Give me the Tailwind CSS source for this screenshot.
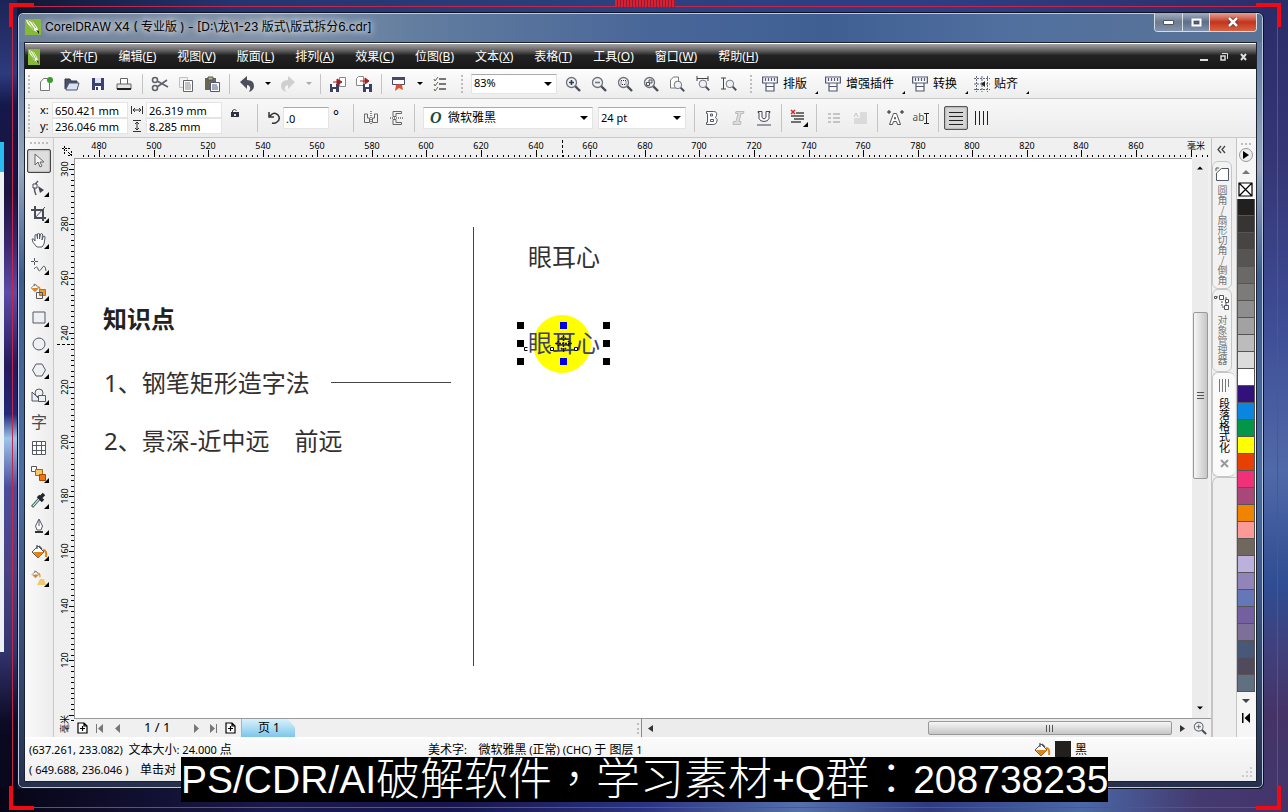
<!DOCTYPE html>
<html lang="zh-CN">
<head>
<meta charset="utf-8">
<title>CorelDRAW X4</title>
<script src="https://cdn.jsdelivr.net/npm/@tailwindcss/browser@4"></script>
</head>
<body class="h-screen overflow-hidden bg-[#2a2d6c] font-['Noto_Sans','Noto_Sans_CJK_SC',sans-serif] text-xs text-black">
<svg width="0" height="0" class="absolute" aria-hidden="true">
  <symbol id="lens" viewBox="0 0 16 16"><path d="M10 10l5 5" stroke="#4b4d57" stroke-width="2.4"/><circle cx="6.5" cy="6.5" r="5" fill="#eef1f5" stroke="#70737c" stroke-width="1.3"/></symbol>
  <symbol id="corner" viewBox="0 0 5 5"><path d="M5 0v5H0z" fill="#000"/></symbol>
  <symbol id="down" viewBox="0 0 8 4"><path d="M0 0h8L4 4z"/></symbol>
  <symbol id="plug" viewBox="0 0 16 16"><path d="M.6 1h14.800v6H.6zM4 7h8v8H4zM4 10.500h8M3.500 2v3M6.500 2v3M9.500 2v3M12.500 2v3" fill="#fafafa" stroke="#555a72" stroke-width="1.2"/></symbol>
  <symbol id="bucket" viewBox="0 0 18 16"><path d="M2 8l6-6 6 6-6 6z" fill="#fff" stroke="#50535f"/><path d="M3 8h11l-6 6z" fill="#e08314"/><path d="M7 5V1M9 2l3 3" stroke="#50535f" stroke-width="1.3"/><path d="M13 6q4 0 3 7" fill="none" stroke="#e08314" stroke-width="2"/></symbol>
  <symbol id="logo" viewBox="0 0 16 16"><path d="M0 0h16v16H0z" fill="#86b83a"/><path d="M1 1l7 2 4 5 2 6-6-3-5-5z" fill="#f8fbf2"/><path d="M3 2l6 8M6 2l5 7M2 5l7 6" stroke="#86b83a"/><path d="M11 11l3 1 0 3z" fill="#111"/></symbol>
  <symbol id="addpage" viewBox="0 0 11 12"><path d="M1 1h6l3 3v7H1zM7 1v3h3M5.500 4v5M3 6.500h5" fill="#fff" stroke="#000" stroke-width="1.200"/></symbol>
</svg>

<div class="relative flex h-full flex-col bg-[linear-gradient(90deg,#10142f_0%,#24346f_18%,#2c417f_50%,#2d3d83_75%,#2c2f6c_97%)] pt-3 pr-6 pb-[23px] pl-[17px]">
  <div class="absolute top-0 bottom-0 left-0 w-[17px] bg-[linear-gradient(180deg,#1c2456_0%,#2d3b7d_9%,#14184a_13%,#1b1440_24%,#3b2770_30%,#5c4ba8_36%,#241a5c_45%,#222878_51%,#9cc4ea_54%,#4b4c9c_60%,#4a4384_70%,#33356f_80%,#0c0a24_89%,#080618_100%)]"></div>
  <div class="absolute top-[142px] bottom-40 left-0 w-1 bg-[#eef1f4]"></div>
  <div class="absolute top-[142px] left-0 h-[30px] w-1 bg-[#28bdf0]"></div>
  <div class="absolute top-0 right-0 bottom-0 w-[26px] bg-[linear-gradient(180deg,#2a2c69_0%,#353675_20%,#3e4d96_40%,#5069a8_58%,#2f4d92_72%,#40407c_80%,#453367_88%,#41376c_100%)]"></div>
  <div class="absolute right-0 bottom-0 left-0 h-[23px] bg-[linear-gradient(90deg,#070515_0%,#1b1a4c_22%,#17154c_35%,#2a3482_50%,#5470aa_62%,#2d3b80_72%,#4a68a6_84%,#443a70_93%,#43346a_100%)]"></div>

  <!-- application window -->
  <main class="relative flex min-h-0 flex-1 flex-col rounded-md border border-[#0e1220] bg-[linear-gradient(180deg,#51709a_0%,#9aa8bf_20%,#3c5d8d_34%,#4a6fa4_60%,#26304c_100%)] px-1.5 pb-1.5 shadow-[inset_0_0_0_1px_#bccbdf]">
    <div class="absolute top-px right-px left-px h-7 rounded-t-md bg-[linear-gradient(90deg,#6e819a_0%,#8393a8_20%,#627d9f_32%,#4a6799_50%,#3f5f93_65%,#51709f_80%,#5b7495_100%)]"></div>
    <header class="relative flex h-[29px] shrink-0 items-start">
      <div class="flex h-7 items-center gap-1 pl-px">
        <svg class="h-4 w-4" aria-hidden="true"><use href="#logo"/></svg>
        <h1 class="font-['Inter','Noto_Sans_CJK_SC',sans-serif] text-xs whitespace-pre [text-shadow:0_0_6px_#fff,0_0_8px_#fff]">CorelDRAW X4 ( 专业版 ) - [D:\龙\1-23 版式\版式拆分6.cdr]</h1>
      </div>
      <div class="ml-auto flex h-[19px] overflow-hidden rounded-b border border-t-0 border-[#d6dce6]">
        <button aria-label="最小化" class="flex w-[28px] items-center justify-center border-r border-[#d6dce6] bg-linear-to-b from-[#a5afbf] via-[#6d7a91] to-[#8493aa]"><svg width="11" height="5"><path d="M.5.5h10v4H.5z" fill="#fff" stroke="#4b5366"/></svg></button>
        <button aria-label="最大化" class="flex w-[27px] items-center justify-center border-r border-[#d6dce6] bg-linear-to-b from-[#a5afbf] via-[#5d6d88] to-[#8493aa]"><svg width="11" height="9"><path d="M1.500 1.500h8v6h-8z" fill="none" stroke="#fff" stroke-width="2"/><path d="M3.500 3.500h4v2h-4z" fill="none" stroke="#434e64"/></svg></button>
        <button aria-label="关闭" class="flex w-[46px] items-center justify-center bg-linear-to-b from-[#e3a094] via-[#c2331c] to-[#d8613f]"><svg width="12" height="10"><path d="M2 1l8 8M10 1L2 9" stroke="#5b2a2a" stroke-width="4"/><path d="M2 1l8 8M10 1L2 9" stroke="#fff" stroke-width="2.500"/></svg></button>
      </div>
    </header>

    <div class="relative flex min-h-0 flex-1 flex-col border border-[#1b2130] bg-[#f0f0f0]">
      <!-- menu -->
      <nav class="flex h-[26px] shrink-0 items-center border-t border-white bg-[linear-gradient(180deg,#a5a3a4_0%,#5c5a5b_28%,#222_46%,#171717_100%)] text-white">
        <svg class="ml-[3px] h-4 w-3" viewBox="0 0 16 16" preserveAspectRatio="none" aria-hidden="true"><use href="#logo"/></svg>
        <div class="ml-5 flex gap-[21px] whitespace-nowrap">
          <button>文件(<u>F</u>)</button><button>编辑(<u>E</u>)</button><button>视图(<u>V</u>)</button><button>版面(<u>L</u>)</button><button>排列(<u>A</u>)</button><button>效果(<u>C</u>)</button><button>位图(<u>B</u>)</button><button>文本(<u>X</u>)</button><button>表格(<u>T</u>)</button><button>工具(<u>O</u>)</button><button>窗口(<u>W</u>)</button><button>帮助(<u>H</u>)</button>
        </div>
        <div class="mr-2 ml-auto flex items-center gap-3 text-[#ddd]">
          <button aria-label="最小化文档"><svg width="8" height="8"><path d="M0 7h8" stroke="#ddd" stroke-width="2"/></svg></button>
          <button aria-label="还原文档"><svg width="8" height="8" fill="none" stroke="#ddd"><path d="M2 .5h5.500V6"/><path d="M1 3h4v4H1z" stroke-width="1.500"/></svg></button>
          <button aria-label="关闭文档"><svg width="8" height="8"><path d="M1 1l5 6M6 1L1 7" stroke="#ddd" stroke-width="2"/></svg></button>
        </div>
      </nav>

      <!-- standard toolbar -->
      <div class="flex h-[30px] shrink-0 items-center border-b border-[#c9c9c9] bg-linear-to-b from-[#fdfdfd] to-[#ededed]">
        <i class="mx-[3px] h-[18px] w-0.5 border-l-2 border-dotted border-[#bdbdbd]"></i>
        <button aria-label="新建" class="flex h-6 w-[26px] items-center justify-center"><svg width="16" height="16"><path d="M2.500 6l3-3.500h6v12h-9z" fill="#fafafa" stroke="#777"/><circle cx="12" cy="4" r="3" fill="#3d9a2c"/></svg></button>
        <button aria-label="打开" class="flex h-6 w-[26px] items-center justify-center"><svg width="16" height="16"><path d="M1 13V3h5l1 2h6v3" fill="#44506a" stroke="#33394d"/><path d="M2 13l3-6h10l-2 7H2z" fill="#dbe2f2" stroke="#4d556b"/></svg></button>
        <button aria-label="保存" class="flex h-6 w-[26px] items-center justify-center"><svg width="14" height="14"><path d="M1 1h12v12H1z" fill="#3c3f72"/><path d="M4 1h6v5H4z" fill="#dfe3f3"/><path d="M4 9h6v4H4z" fill="#fff"/><path d="M5 10h2v3H5z" fill="#3c3f72"/></svg></button>
        <button aria-label="打印" class="flex h-6 w-[26px] items-center justify-center"><svg width="16" height="16"><path d="M4.500 8V2.500h7V8" fill="#fff" stroke="#666"/><path d="M1 8h14v5H1z" fill="#e4e4e4" stroke="#666"/><path d="M1 13h14" stroke="#222" stroke-width="2"/></svg></button>
        <i class="mr-1 ml-[5px] h-5 w-px bg-[#c4c4c4]"></i>
        <button aria-label="剪切" class="flex h-6 w-[26px] items-center justify-center"><svg width="18" height="16" fill="none" stroke="#60626b" stroke-width="1.600"><circle cx="4" cy="4" r="2.500"/><circle cx="4" cy="12" r="2.500"/><path d="M6 5l11 6M6 11l10-7"/></svg></button>
        <button aria-label="复制" class="flex h-6 w-[26px] items-center justify-center"><svg width="16" height="16"><path d="M1.500 1.500h8v10h-8z" fill="#f3f3f3" stroke="#c0c0c0"/><path d="M5.500 4.500h9v11h-9z" fill="#fff" stroke="#62646e"/><path d="M7 7h5M7 9h6M7 11h6M7 13h6" stroke="#888"/></svg></button>
        <button aria-label="粘贴" class="flex h-6 w-[26px] items-center justify-center"><svg width="16" height="16"><path d="M1 2h11v12H1z" fill="#6b6450"/><path d="M4 1h5v3H4z" fill="#b7b29c" stroke="#555"/><path d="M6.500 6.500h9v9h-9z" fill="#fff" stroke="#50557b"/><path d="M8 9h5M8 11h6M8 13h6" stroke="#50557b"/></svg></button>
        <i class="mx-1 h-5 w-px bg-[#c4c4c4]"></i>
        <button aria-label="撤消" class="flex h-6 w-[26px] items-center justify-center"><svg width="16" height="16"><path d="M1 6l7-6v4q7 0 7 6 0 4-5 6 2-3 1-5-1-2-3-2v4z" fill="#4c4e5c"/></svg></button>
        <button aria-label="撤消列表" class="flex h-6 w-[15px] items-center justify-center"><svg class="h-[3px] w-1.5"><use href="#down"/></svg></button>
        <button aria-label="重做" class="flex h-6 w-[26px] items-center justify-center"><svg width="16" height="16"><path d="M15 6L8 0v4Q1 4 1 10q0 4 5 6-2-3-1-5 1-2 3-2v4z" fill="#cfcfcf"/></svg></button>
        <button aria-label="重做列表" class="flex h-6 w-[15px] items-center justify-center"><svg class="h-[3px] w-1.5 fill-[#aaa]"><use href="#down"/></svg></button>
        <i class="mx-1 h-5 w-px bg-[#c4c4c4]"></i>
        <button aria-label="导入" class="flex h-6 w-[26px] items-center justify-center"><svg width="18" height="16"><path d="M10.500 1.500h6v9h-6z" fill="#fff" stroke="#888"/><path d="M1 8h9v8H1z" fill="#3c3f62"/><path d="M3 8h4v3H3zM4 13h3v3H4z" fill="#fff"/><path d="M4 6h6M8 3l5 3-5 3z" fill="#a02020" stroke="#a02020"/></svg></button>
        <button aria-label="导出" class="flex h-6 w-[26px] items-center justify-center"><svg width="18" height="16"><path d="M1.500 2.500l2-2h5v9h-7z" fill="#fff" stroke="#888"/><path d="M8 8h9v8H8z" fill="#3c3f62"/><path d="M10 8h4v3h-4zM11 13h3v3h-3z" fill="#fff"/><path d="M5 5h6M10 2l4 3-4 3z" fill="#a02020" stroke="#a02020"/></svg></button>
        <i class="mx-1 h-5 w-px bg-[#c4c4c4]"></i>
        <button aria-label="应用程序启动器" class="flex h-6 w-[26px] items-center justify-center"><svg width="16" height="16"><path d="M1.500 1.500h12v7h-12z" fill="#fff" stroke="#444a66"/><path d="M1 1h13v3H1z" fill="#444a66"/><path d="M5 9l3-1 3 1 1 5-4-2-4 3z" fill="#e2502c"/></svg></button>
        <button aria-label="启动列表" class="flex h-6 w-[15px] items-center justify-center"><svg class="h-[3px] w-1.5"><use href="#down"/></svg></button>
        <button aria-label="选项" class="flex h-6 w-[26px] items-center justify-center"><svg width="14" height="16" fill="none"><path d="M6 3h7M6 8h7M6 13h7" stroke="#777" stroke-width="2"/><path d="M1 3l1 2 3-4M1 8l1 2 3-4M1 13l1 2 3-4" stroke="#5c6c4d"/></svg></button>
        <i class="mr-2 ml-2 h-[18px] w-0.5 border-l-2 border-dotted border-[#bdbdbd]"></i>
        <div class="relative flex h-5 w-[86px] items-center border border-[#e4e4e4] border-t-[#aaa] bg-white">
          <select aria-label="缩放级别" class="h-full w-full appearance-none pl-0.5 text-[11px]"><option>83%</option></select>
          <svg class="pointer-events-none absolute right-1 h-1 w-2"><use href="#down"/></svg>
        </div>
        <div class="ml-[3px] flex">
          <button aria-label="放大" class="flex h-6 w-[26px] items-center justify-center"><svg width="16" height="16"><use href="#lens"/><path d="M4 6.500h5M6.500 4v5" stroke="#333a55" stroke-width="1.600"/></svg></button>
          <button aria-label="缩小" class="flex h-6 w-[26px] items-center justify-center"><svg width="16" height="16"><use href="#lens"/><path d="M4 6.500h5" stroke="#777" stroke-width="1.600"/></svg></button>
          <button aria-label="缩放选定范围" class="flex h-6 w-[26px] items-center justify-center"><svg width="16" height="16"><use href="#lens"/><path d="M4 4.500h5v4H4z" fill="none" stroke="#333" stroke-dasharray="1 1"/></svg></button>
          <button aria-label="缩放全部对象" class="flex h-6 w-[26px] items-center justify-center"><svg width="16" height="16"><use href="#lens"/><path d="M3.500 6.500h3v3h-3zM6 4h3v3H6z" fill="none" stroke="#555"/></svg></button>
          <button aria-label="缩放页面" class="flex h-6 w-[26px] items-center justify-center"><svg width="16" height="16"><path d="M1.500 12V4l3-3h5v11z" fill="#fff" stroke="#777"/><svg x="4" y="4" width="12" height="12"><use href="#lens"/></svg></svg></button>
          <button aria-label="按页宽缩放" class="flex h-6 w-[26px] items-center justify-center"><svg width="16" height="16"><path d="M2 0v5M13 0v5M2 2.500h11" stroke="#444"/><svg x="3" y="3" width="12" height="12"><use href="#lens"/></svg></svg></button>
          <button aria-label="按页高缩放" class="flex h-6 w-[26px] items-center justify-center"><svg width="16" height="16"><path d="M0 2h5M0 13h5M2.500 2v11" stroke="#444"/><svg x="4" y="3" width="12" height="12"><use href="#lens"/></svg></svg></button>
        </div>
        <i class="mr-[9px] ml-2 h-[18px] w-0.5 border-l-2 border-dotted border-[#bdbdbd]"></i>
        <div class="flex gap-1.5 whitespace-nowrap">
          <button class="flex items-center gap-1"><svg class="h-4 w-[18px]"><use href="#plug"/></svg>排版<svg class="mt-[17px] ml-1 h-[3px] w-[3px]"><use href="#corner"/></svg></button>
          <button class="flex items-center gap-1"><svg class="h-4 w-[18px]"><use href="#plug"/></svg>增强插件<svg class="mt-[17px] ml-1 h-[3px] w-[3px]"><use href="#corner"/></svg></button>
          <button class="flex items-center gap-1"><svg class="h-4 w-[18px]"><use href="#plug"/></svg>转换<svg class="mt-[17px] ml-1 h-[3px] w-[3px]"><use href="#corner"/></svg></button>
          <button class="flex items-center gap-1"><svg width="16" height="16"><path d="M0 2.500h16M0 13.500h16M2.500 0v16M13.500 0v16M8 0v16M0 8h16" stroke="#62667e" stroke-dasharray="2 1"/><path d="M11 5v6L7 8z" fill="#222"/></svg>贴齐<svg class="mt-[17px] ml-1 h-[3px] w-[3px]"><use href="#corner"/></svg></button>
        </div>
      </div>

      <!-- property bar -->
      <div class="flex h-[39px] shrink-0 items-center border-b border-[#c9c9c9] bg-linear-to-b from-[#f8f8f8] to-[#ececec] text-[11px]">
        <i class="mx-[3px] h-7 w-0.5 border-l-2 border-dotted border-[#bdbdbd]"></i>
        <div class="ml-[7px] grid grid-cols-[12px_76px_18px_76px] items-center">
          <label for="px">x:</label><input id="px" value="650.421 mm" class="h-4 w-full border border-[#e4e4e4] bg-white pl-0.5">
          <svg class="mx-auto" width="12" height="10" fill="none" stroke="#333"><path d="M.5 1v8M11.500 1v8M2 5h8M4 3L2 5l2 2M8 3l2 2-2 2"/></svg><input aria-label="宽度" value="26.319 mm" class="h-4 w-full border border-[#e4e4e4] bg-white pl-0.5">
          <label for="py">y:</label><input id="py" value="236.046 mm" class="h-4 w-full border border-[#e4e4e4] bg-white pl-0.5">
          <svg class="mx-auto" width="10" height="12" fill="none" stroke="#333"><path d="M1 .5h8M1 11.500h8M5 2v8M3 4l2-2 2 2M3 8l2 2 2-2"/></svg><input aria-label="高度" value="8.285 mm" class="h-4 w-full border border-[#e4e4e4] bg-white pl-0.5">
        </div>
        <button aria-label="锁定比率" class="mb-2.5 ml-2"><svg width="10" height="10"><path d="M2.500 5V2.500q2-2 4 0" fill="none" stroke="#333"/><path d="M1 4h8v5H1z" fill="#30323f"/><path d="M4 6h2v2H4z" fill="#ddd"/></svg></button>
        <i class="mr-[9px] ml-[17px] h-7 w-px bg-[#c4c4c4]"></i>
        <svg width="14" height="14" fill="none" stroke="#333" stroke-width="1.500"><path d="M3 5q4-5 8-1 3 4-1 7-2 2-5 1M2 1v5h5"/></svg>
        <input aria-label="旋转角度" value=".0" class="ml-0.5 h-[22px] w-[46px] border border-[#e4e4e4] border-t-[#aaa] bg-white pl-0.5">
        <span class="mb-1 ml-1 text-sm leading-none">°</span>
        <i class="mr-1 ml-[14px] h-7 w-px bg-[#c4c4c4]"></i>
        <button aria-label="水平镜像" class="flex h-6 w-[26px] items-center justify-center"><svg width="16" height="14" fill="none" stroke="#666"><path d="M1.500 3v8.500h5V7h-2V3zM14.500 3v8.500h-5V7h2V3z"/><path d="M8 0v14" stroke="#222" stroke-dasharray="1 1"/></svg></button>
        <button aria-label="垂直镜像" class="flex h-6 w-[26px] items-center justify-center"><svg width="14" height="16" fill="none" stroke="#666"><path d="M3 1.500h8.500v2H6v3H3zM3 14.500h8.500v-2H6v-3H3z"/><path d="M0 8h14" stroke="#222" stroke-dasharray="1 1"/></svg></button>
        <i class="mr-2 ml-1 h-7 w-px bg-[#c4c4c4]"></i>
        <div class="relative flex h-[22px] w-[170px] items-center border border-[#e4e4e4] border-t-[#aaa] bg-white">
          <span class="absolute left-1.5 font-['Liberation_Serif'] text-base leading-none font-bold text-[#174c3d] italic" aria-hidden="true">O</span>
          <select aria-label="字体" class="h-full w-full appearance-none pl-6 text-xs"><option>微软雅黑</option></select>
          <svg class="pointer-events-none absolute right-1 h-1 w-2"><use href="#down"/></svg>
        </div>
        <div class="relative ml-[5px] flex h-[22px] w-[88px] items-center border border-[#e4e4e4] border-t-[#aaa] bg-white">
          <select aria-label="字体大小" class="h-full w-full appearance-none pl-0.5 text-[11px]"><option>24 pt</option></select>
          <svg class="pointer-events-none absolute right-1 h-1 w-2"><use href="#down"/></svg>
        </div>
        <i class="mr-1 ml-2 h-7 w-px bg-[#c4c4c4]"></i>
        <button aria-label="粗体" class="flex h-6 w-[26px] items-center justify-center"><svg width="12" height="14" fill="#fff" stroke="#555866"><path d="M.5.500h7q4 0 3 4-1 2-1 2 3 2 1 5-1 2-3 2h-7v-2h1v-9h-1z"/><path d="M4.500 3h2v2h-2zM4.500 8.500h3v2h-3z"/></svg></button>
        <button aria-label="斜体" class="flex h-6 w-[26px] items-center justify-center"><svg width="13" height="14" fill="#ddd" stroke="#bbb"><path d="M4 .5h8l-.5 2H9l-2 8h2l-.5 3H1l.5-3H4l2-8H3.500z"/></svg></button>
        <button aria-label="下划线" class="flex h-6 w-[26px] items-center justify-center"><svg width="14" height="15" fill="#fff" stroke="#444654"><path d="M1 .5h4v6q2 3 4 0v-6h4v1h-1v6q-1 3-5 3t-5-3v-6H1z"/><path d="M0 14h14"/></svg></button>
        <i class="mx-1 h-7 w-px bg-[#c4c4c4]"></i>
        <button aria-label="对齐" class="flex h-6 w-[26px] items-center justify-center"><svg width="18" height="18"><path d="M6 4h8M1 7h13M4 10h10M1 13h10" stroke="#444" stroke-width="1.500"/><path d="M1 1l4 4M5 1L1 5" stroke="#d22" stroke-width="1.500"/><path d="M18 13v5h-5z"/></svg></button>
        <i class="mr-1 ml-1 h-7 w-px bg-[#c4c4c4]"></i>
        <button aria-label="项目符号" class="flex h-6 w-[26px] items-center justify-center"><svg width="12" height="12" stroke="#c4c4c4" stroke-width="2"><path d="M0 2h3M5 2h7M0 6h3M5 6h7M0 10h3M5 10h7"/></svg></button>
        <button aria-label="首字下沉" class="flex h-6 w-[26px] items-center justify-center"><svg width="13" height="12" stroke="#c4c4c4" fill="none"><path d="M0 5l2-4 2 4M6 1h7M6 3h7M6 5h7M0 7h13M0 9h13M0 11h13"/></svg></button>
        <i class="mx-1 h-7 w-px bg-[#c4c4c4]"></i>
        <button aria-label="字符格式化" class="flex h-6 w-[26px] items-center justify-center"><svg width="17" height="16" fill="#fff" stroke="#555"><path d="M2.500 14.500l4-11h3l4 11h-3l-1-3h-3l-1 3zM7.500 9h1l-.5-2z"/><path d="M0 2h4M2 0v4M13 2h4M15 0v4" stroke="#222"/></svg></button>
        <button aria-label="编辑文本" class="flex h-6 w-[26px] items-center justify-center text-[10px] text-[#555]">ab<svg width="5" height="11" fill="none" stroke="#222"><path d="M0 .5h5M0 10.500h5M2.500 1v9"/></svg></button>
        <i class="mr-[5px] ml-1 h-7 w-px bg-[#c4c4c4]"></i>
        <button aria-label="横排文字" aria-pressed="true" class="flex h-6 w-6 items-center justify-center rounded-xs border border-[#555] bg-[#d6d6d6] shadow-[inset_0_0_2px_#777]"><svg width="15" height="14" stroke="#222"><path d="M0 1.500h14M0 5.500h14M0 9.500h14M0 13.500h14"/></svg></button>
        <button aria-label="竖排文字" class="flex h-6 w-[26px] items-center justify-center"><svg width="15" height="14" stroke="#222"><path d="M1.500 0v14M5.500 0v14M9.500 0v14M13.500 0v14"/></svg></button>
      </div>

      <div class="flex min-h-0 flex-1">
        <!-- toolbox -->
        <aside class="flex w-[29px] shrink-0 flex-col items-center border-r border-[#c9c9c9] bg-linear-to-r from-[#fafafa] to-[#ececec] pt-1">
          <i class="mb-[5px] h-0.5 w-[18px] shrink-0 border-t-2 border-dotted border-[#bdbdbd]"></i>
          <button aria-label="挑选" aria-pressed="true" class="flex h-6 w-6 shrink-0 items-center justify-center rounded-xs border border-[#444] bg-[#dedede] shadow-[inset_0_0_2px_#777]"><svg width="12" height="16"><path d="M2 1v11l3-3 2 5 2-1-2-4h4z" fill="#f4f4f4" stroke="#666"/></svg></button>
          <button aria-label="形状" class="relative mt-0.5 flex h-[26px] w-6 shrink-0 items-center justify-center"><svg width="16" height="16"><path d="M7 1Q1 6 5 15" fill="none" stroke="#556" stroke-width="1.500"/><path d="M2 4h4v4H2z" fill="#fff" stroke="#445"/><path d="M7 6l6 4-4 3z" fill="#445"/></svg><svg class="absolute right-0.5 bottom-1 h-[5px] w-[5px]"><use href="#corner"/></svg></button>
          <button aria-label="裁剪" class="relative flex h-[26px] w-6 shrink-0 items-center justify-center"><svg width="16" height="16" fill="none" stroke="#4a4b58"><path d="M4 0v12h11M0 4h12v11" stroke-width="2"/><path d="M3 13L14 1"/></svg><svg class="absolute right-0.5 bottom-1 h-[5px] w-[5px]"><use href="#corner"/></svg></button>
          <button aria-label="手形" class="relative flex h-[26px] w-6 shrink-0 items-center justify-center"><svg width="16" height="16"><path d="M5 14Q1 10 1 7q2-1 3 2L4 3q1-1 2 0l.5 4V2q1-2 2 0v5l1-5q1-1 2 0L11 8l1.500-4q2 0 1.500 2l-1 6-2 3H6z" fill="#fff" stroke="#555866"/></svg><svg class="absolute right-0.5 bottom-1 h-[5px] w-[5px]"><use href="#corner"/></svg></button>
          <button aria-label="手绘" class="relative flex h-[26px] w-6 shrink-0 items-center justify-center"><svg width="16" height="16" fill="none" stroke="#555866"><path d="M3.500 0v7M0 3.500h7" stroke-dasharray="3 1"/><path d="M3 11q3-4 4 0t4-1 4 3"/></svg><svg class="absolute right-0.5 bottom-1 h-[5px] w-[5px]"><use href="#corner"/></svg></button>
          <button aria-label="智能填充" class="relative flex h-[26px] w-6 shrink-0 items-center justify-center"><svg width="18" height="18"><svg width="11" height="10" viewBox="0 0 18 16"><use href="#bucket"/></svg><path d="M9.500 6.500h6v6h-6z" fill="#f09a30" stroke="#c66b12"/><path d="M6.500 9.500h6v6h-6z" fill="none" stroke="#555"/></svg><svg class="absolute right-0.5 bottom-1 h-[5px] w-[5px]"><use href="#corner"/></svg></button>
          <button aria-label="矩形" class="relative flex h-[26px] w-6 shrink-0 items-center justify-center"><svg width="14" height="14"><path d="M1 1h12v11H1z" fill="#eef0f2" stroke="#555866"/></svg><svg class="absolute right-0.5 bottom-1 h-[5px] w-[5px]"><use href="#corner"/></svg></button>
          <button aria-label="椭圆" class="relative flex h-[26px] w-6 shrink-0 items-center justify-center"><svg width="14" height="14"><circle cx="7" cy="7" r="6" fill="#eef0f2" stroke="#555866"/></svg><svg class="absolute right-0.5 bottom-1 h-[5px] w-[5px]"><use href="#corner"/></svg></button>
          <button aria-label="多边形" class="relative flex h-[26px] w-6 shrink-0 items-center justify-center"><svg width="14" height="14"><path d="M4 1h6l3.500 6L10 13H4L.5 7z" fill="#eef0f2" stroke="#555866"/></svg><svg class="absolute right-0.5 bottom-1 h-[5px] w-[5px]"><use href="#corner"/></svg></button>
          <button aria-label="基本形状" class="relative flex h-[26px] w-6 shrink-0 items-center justify-center"><svg width="16" height="16" fill="#eef0f2" stroke="#555866"><path d="M1 4l9 9H1z"/><circle cx="8" cy="5" r="4"/><path d="M7.500 7.500h7v6h-7z"/></svg><svg class="absolute right-0.5 bottom-1 h-[5px] w-[5px]"><use href="#corner"/></svg></button>
          <button aria-label="文本" class="flex h-[26px] w-6 shrink-0 items-center justify-center text-base leading-none text-[#4a4b55]">字</button>
          <button aria-label="表格" class="flex h-[26px] w-6 shrink-0 items-center justify-center"><svg width="14" height="14"><path d="M.5.500h13v13H.5zM.5 4.500h13M.5 9.500h13M4.500.500v13M9.500.500v13" fill="#fff" stroke="#555866"/></svg></button>
          <button aria-label="交互式" class="relative flex h-[26px] w-6 shrink-0 items-center justify-center"><svg width="16" height="16"><path d="M.5.500h5v5h-5z" fill="#fff" stroke="#555"/><path d="M4.500 3.500h7v6h-7z" fill="#fac66a" stroke="#a46510"/><path d="M8.500 8.500h6v6h-6z" fill="#f0780a" stroke="#a04a05"/></svg><svg class="absolute right-0.5 bottom-1 h-[5px] w-[5px]"><use href="#corner"/></svg></button>
          <button aria-label="滴管" class="relative flex h-[26px] w-6 shrink-0 items-center justify-center"><svg width="16" height="16"><path d="M1 15l8-9" stroke="#4e7a6c" stroke-width="3"/><path d="M2 14l7-8" stroke="#fff"/><path d="M7 4l5 5M9 6l4-4" stroke="#23252e" stroke-width="3.500"/></svg><svg class="absolute right-0.5 bottom-1 h-[5px] w-[5px]"><use href="#corner"/></svg></button>
          <button aria-label="轮廓" class="relative flex h-[26px] w-6 shrink-0 items-center justify-center"><svg width="12" height="16" fill="#fff" stroke="#555866"><path d="M6 1l3.500 7L8 12H4L2.500 8zM6 2v6"/><path d="M2 14h8" stroke="#333" stroke-width="2"/></svg><svg class="absolute right-0.5 bottom-1 h-[5px] w-[5px]"><use href="#corner"/></svg></button>
          <button aria-label="填充" class="relative flex h-[26px] w-6 shrink-0 items-center justify-center"><svg class="h-4 w-[18px]"><use href="#bucket"/></svg><svg class="absolute right-0.5 bottom-1 h-[5px] w-[5px]"><use href="#corner"/></svg></button>
          <button aria-label="交互式填充" class="relative flex h-[26px] w-6 shrink-0 items-center justify-center"><svg width="16" height="16"><svg width="10" height="9" viewBox="0 0 18 16"><use href="#bucket"/></svg><path d="M9 9h4l2 6H6z" fill="#f1cb6a"/></svg><svg class="absolute right-0.5 bottom-1 h-[5px] w-[5px]"><use href="#corner"/></svg></button>
        </aside>

        <!-- drawing area with rulers -->
        <section class="flex min-w-0 flex-1 flex-col">
          <svg id="hr" class="h-5 w-full shrink-0 overflow-hidden bg-[#f0f0f0] text-[9px]" shape-rendering="crispEdges"></svg>
          <div class="flex min-h-0 flex-1">
            <svg id="vr" class="h-full w-5 shrink-0 bg-[#f0f0f0] text-[9px]" shape-rendering="crispEdges"></svg>
            <div class="flex min-w-0 flex-1 flex-col">
              <div class="flex min-h-0 flex-1">
                <div class="relative min-w-0 flex-1 overflow-hidden border-t border-l border-[#999] bg-white text-2xl leading-8 whitespace-pre text-[#33302f]">
                  <p class="absolute top-36 left-7 font-bold text-[#222]">知识点</p>
                  <p class="absolute top-52 left-[29px]">1、钢笔矩形造字法</p>
                  <p class="absolute top-[266px] left-[29px]">2、景深-近中远    前远</p>
                  <i class="absolute top-[223px] left-64 h-px w-[120px] bg-[#444]"></i>
                  <i class="absolute top-[68px] left-[398px] h-[439px] w-px bg-[#444]"></i>
                  <p class="absolute top-[82px] left-[453px]">眼耳心</p>
                  <i class="absolute top-[156px] left-[458px] h-[58px] w-[58px] rounded-full bg-[#ffff00]"></i>
                  <p class="absolute top-[168px] left-[453px] text-[#3f3f6c]">眼耳心</p>
                  <svg class="absolute top-[162px] left-[441px]" width="96" height="46" aria-hidden="true">
                    <path d="M1 1h7v7H1zM87 1h7v7h-7zM1 19h7v7H1zM87 19h7v7h-7zM1 37h7v7H1zM87 37h7v7h-7z"/>
                    <path d="M44 1h7v7h-7zM44 37h7v7h-7z" fill="#0000e6"/>
                    <path d="M11.500 29.500h-3v-3h3M34.500 26.500h3v3h-3zM58.500 26.500h3v3h-3z" fill="#fff" stroke="#000"/>
                    <path d="M47.500 15v14M40 22.500h15M45 18l2.500-3 2.500 3M45 27l2.500 3 2.500-3M43 20l-3 2.500 3 2.500M52 20l3 2.500-3 2.500" fill="none" stroke="#111" stroke-width="1.500" stroke-dasharray="2 1"/>
                  </svg>
                </div>
                <div class="flex w-4 shrink-0 flex-col items-center bg-[#ececec] py-2" role="scrollbar" aria-orientation="vertical" aria-controls="hr" aria-valuenow="40">
                  <svg class="h-1 w-1.5 rotate-180"><use href="#down"/></svg>
                  <div class="flex-[142]"></div>
                  <div class="flex w-[15px] flex-[166] items-center justify-center rounded-xs border border-[#999] bg-linear-to-r from-[#f6f6f6] to-[#c6c6c6]"><i class="h-[7px] w-[7px] bg-[repeating-linear-gradient(180deg,#555_0_1px,transparent_1px_3px)]"></i></div>
                  <div class="flex-[227]"></div>
                  <svg class="h-1 w-1.5"><use href="#down"/></svg>
                </div>
                <div class="w-[3px] bg-[#f0f0f0]"></div>
              </div>
              <div class="flex h-[19px] shrink-0 items-center border-t border-[#999]">
                <div class="flex h-full w-[568px] shrink-0 items-center">
                  <button aria-label="前面添加页面" class="ml-[3px]"><svg class="h-3 w-[11px]"><use href="#addpage"/></svg></button>
                  <button aria-label="第一页" class="ml-[7px]"><svg width="9" height="9" fill="#777"><path d="M1 0h1v9H1zM8 0v9L3 4.500z"/></svg></button>
                  <button aria-label="上一页" class="ml-2.5"><svg width="7" height="9" fill="#777"><path d="M6 0v9L1 4.500z"/></svg></button>
                  <span class="mx-[23px] text-[13px]">1 / 1</span>
                  <button aria-label="下一页"><svg width="7" height="9" fill="#777"><path d="M1 0v9l5-4.500z"/></svg></button>
                  <button aria-label="最后一页" class="ml-[9px]"><svg width="9" height="9" fill="#777"><path d="M7 0h1v9H7zM1 0v9l5-4.500z"/></svg></button>
                  <button aria-label="后面添加页面" class="ml-[7px]"><svg class="h-3 w-[11px]"><use href="#addpage"/></svg></button>
                  <button class="ml-[5px] h-full w-[54px] border-l border-[#5686a0] bg-linear-to-b from-[#d8f1fc] to-[#7cc6ea] text-xs leading-none [clip-path:polygon(0_0,86%_0,100%_50%,100%_100%,0_100%)]">页 1</button>
                  <i class="ml-auto h-[11px] w-0.5 border-l-2 border-dotted border-[#bdbdbd]"></i>
                  <i class="ml-0.5 h-full w-px bg-[#888]"></i>
                </div>
                <div class="flex h-full flex-1 items-center bg-[#ececec] pr-2 pl-1.5" role="scrollbar" aria-orientation="horizontal" aria-controls="hr" aria-valuenow="90">
                  <svg width="5" height="7"><path d="M5 0v7L0 3.500z" fill="#333"/></svg>
                  <div class="flex-[275]"></div>
                  <div class="flex h-[14px] flex-[242] items-center justify-center rounded-xs border border-[#999] bg-linear-to-b from-[#f6f6f6] to-[#c6c6c6]"><i class="h-[7px] w-[9px] bg-[repeating-linear-gradient(90deg,#555_0_1px,transparent_1px_3px)]"></i></div>
                  <svg class="ml-2" width="5" height="7"><path d="M0 0v7l5-3.500z" fill="#333"/></svg>
                </div>
                <button aria-label="导航器" class="mr-1"><svg width="14" height="14" viewBox="0 0 16 16"><use href="#lens"/><path d="M4 6.500h5M6.500 4v5" stroke="#555"/></svg></button>
              </div>
            </div>
          </div>
        </section>

        <!-- dockers -->
        <aside class="flex w-[25px] shrink-0 flex-col border-l border-[#c4c4c4] bg-[#efefef]">
          <button aria-label="展开泊坞窗" class="flex h-[23px] shrink-0 items-center justify-center pr-1.5"><svg width="9" height="9" fill="none" stroke="#444" stroke-width="1.300"><path d="M4 1L1 4.500 4 8M8 1L5 4.500 8 8"/></svg></button>
          <button class="flex h-32 w-5 shrink-0 flex-col items-center gap-1 rounded-md border border-[#c6c6c6] bg-[#f3f3f3] pt-[5px] font-['Noto_Sans_CJK_SC',sans-serif] text-[10px] leading-none text-[#777]"><svg class="shrink-0" width="15" height="14"><path d="M1.500 13.500V6l5-4.500h7v12z" fill="#fff" stroke="#555866"/><path d="M1 1h3M1 1v3" stroke="#555"/></svg><span class="whitespace-nowrap [text-orientation:upright] [writing-mode:vertical-rl]">圆角/扇形切角/倒角</span></button>
          <button class="flex h-[83px] w-5 shrink-0 flex-col items-center gap-1 rounded-md border border-[#c6c6c6] bg-[#f3f3f3] pt-1 text-[10px] leading-none text-[#777]"><svg class="shrink-0" width="16" height="17" fill="#fff" stroke="#555"><path d="M2 3h4M8 4v9h4M12 3v9" stroke-dasharray="2 1"/><path d="M5.500 1.500h4v4h-4zM.5 2.500h2v2h-2zM11.500 5.500h3v3h-3zM10.500 11.500h4v4h-4z"/></svg><span class="whitespace-nowrap [writing-mode:vertical-rl]">对象管理器</span></button>
          <div class="flex h-[105px] w-[23px] shrink-0 flex-col items-center gap-1.5 rounded-md border border-r-0 border-[#c6c6c6] bg-[#fafafa] pt-1.5 text-[11px] leading-none"><svg class="shrink-0" width="13" height="13" stroke="#777"><path d="M1.500 0v13M4.500 0v13M7.500 0v13M10.500 0v8"/></svg><button class="whitespace-nowrap [writing-mode:vertical-rl]">段落格式化</button><button aria-label="关闭泊坞窗"><svg class="block" width="9" height="9" stroke="#999" stroke-width="2"><path d="M1 1l7 7M8 1L1 8"/></svg></button></div>
          <div class="flex-1 rounded-tl-md border-t border-l border-[#c6c6c6]"></div>
        </aside>

        <!-- colour palette -->
        <aside class="flex w-5 shrink-0 flex-col items-center border-l border-[#c4c4c4] bg-[#f6f6f6] pr-px">
          <i class="mt-[5px] h-0.5 w-2.5 border-t-2 border-dotted border-[#bdbdbd]"></i>
          <button aria-label="调色板菜单" class="mt-[3px] flex h-[14px] w-[14px] shrink-0 items-center justify-center rounded-full border border-[#999] bg-[#eee]"><svg width="6" height="8"><path d="M0 0v8l6-4z"/></svg></button>
          <button aria-label="向上滚动" class="my-2"><svg class="block h-1 w-2 rotate-180 fill-[#777]"><use href="#down"/></svg></button>
          <button aria-label="无填充" class="mb-px h-4 w-4 shrink-0"><svg width="16" height="16"><path d="M1 1h13v13H1zM1 1l13 13M14 1L1 14" fill="#fff" stroke="#000" stroke-width="1.200"/></svg></button>
          <div id="pal" class="flex w-[18px] flex-col"></div>
          <button aria-label="向下滚动" class="mt-[7px]"><svg class="block h-1 w-2 fill-[#444]"><use href="#down"/></svg></button>
          <button aria-label="展开调色板" class="mt-2.5"><svg class="block" width="8" height="10"><path d="M0 0h1.500v10H0zM8 0v10L2.500 5z"/></svg></button>
        </aside>
      </div>

      <!-- status bar -->
      <footer class="relative flex h-11 shrink-0 flex-col border-t-2 border-white bg-linear-to-b from-[#fafafa] to-[#eee] pt-px pl-1 text-[11px] leading-5 whitespace-pre">
        <div class="flex h-5">
          <span class="w-[399px]">(637.261, 233.082)  <span class="text-xs">文本大小</span>: 24.000 <span class="text-xs">点</span></span>
          <span><span class="text-xs">美术字</span>:    <span class="text-xs">微软雅黑</span> (<span class="text-xs">正常</span>) (CHC) <span class="text-xs">于 图层</span> 1</span>
          <span class="mr-[169px] ml-auto flex items-start gap-1 text-xs leading-5"><svg class="mt-0.5 h-4 w-[18px]"><use href="#bucket"/></svg><i class="mt-px h-4 w-4 bg-[#22201f]"></i>黑</span>
        </div>
        <span>( 649.688, 236.046 )    <span class="text-xs">单击对</span></span>
        <svg class="absolute right-1 bottom-1" width="10" height="10" fill="#ccc"><path d="M8 0h2v2H8zM4 4h2v2H4zM8 4h2v2H8zM0 8h2v2H0zM4 8h2v2H4zM8 8h2v2H8z"/></svg>
      </footer>
    </div>
  </main>

  <!-- recording frame and caption -->
  <div class="pointer-events-none absolute top-1.5 right-2.5 bottom-1 left-3 border border-[#c02a48]"></div>
  <i class="absolute top-[3px] left-[9px] h-6 w-[25px] border-t-4 border-l-4 border-[#f00a14]"></i>
  <i class="absolute top-[3px] right-[7px] h-6 w-[25px] border-t-4 border-r-4 border-[#f00a14]"></i>
  <i class="absolute bottom-0.5 left-[9px] h-6 w-[25px] border-b-4 border-l-4 border-[#f00a14]"></i>
  <i class="absolute right-[7px] bottom-0.5 h-6 w-[25px] border-r-4 border-b-4 border-[#f00a14]"></i>
  <i class="absolute top-0 left-1/2 ml-[-29px] h-[7px] w-[60px] bg-[repeating-linear-gradient(90deg,#d8202e_0_2px,#8b1c3c_2px_3px)]"></i>
  <p lang="zh-TW" class="absolute bottom-2.5 left-[181px] flex h-[45px] items-center bg-black font-['Liberation_Sans','Noto_Sans_CJK_TC',sans-serif] text-[39px] leading-none font-light whitespace-nowrap text-white">PS/CDR/AI<span class="text-[44px]">破解软件，学习素材</span>+Q<span class="text-[44px]">群：</span>208738235</p>
</div>

<script>
const NS = 'http://www.w3.org/2000/svg';
function add(parent, tag, attrs, text) {
  const el = document.createElementNS(NS, tag);
  for (const k in attrs) el.setAttribute(k, attrs[k]);
  if (text) el.textContent = text;
  parent.appendChild(el);
}
const STEP = 54.58;
// horizontal ruler, starting 45px in at 480
const hr = document.getElementById('hr');
let d = '';
for (let i = -3; i < 210; i++) {
  const x = Math.round(45 + i * STEP / 10);
  if (x < 22 || x > 1153) continue;
  d += `M${x}.5 ${i % 10 ? 17 : 12}V19`;
}
add(hr, 'path', { d, stroke: '#000' });
for (let i = 0; i < 20; i++) add(hr, 'text', { x: Math.round(45 + i * STEP), y: 11, 'text-anchor': 'middle' }, String(480 + i * 20));
add(hr, 'text', { x: 1142, y: 11, 'text-anchor': 'middle' }, '毫米');
add(hr, 'path', { d: 'M508.5 2V19', stroke: '#000', 'stroke-dasharray': '3 2' });
add(hr, 'path', { d: 'M8 10.5h9M10.5 8v9M12 12l5 5M17.5 13v4.500h-5', fill: 'none', stroke: '#000', 'stroke-dasharray': '2 1' });
// vertical ruler, 300 sits 11px down
const vr = document.getElementById('vr');
d = '';
for (let i = -1; i < 102; i++) {
  const y = Math.round(11 + i * STEP / 10);
  d += `M${i % 10 ? 17 : 15} ${y}.5H20`;
}
add(vr, 'path', { d, stroke: '#000' });
for (let i = 0; i < 10; i++) {
  const y = Math.round(11 + i * STEP);
  add(vr, 'text', { x: 14, y, transform: `rotate(-90 14 ${y})`, 'text-anchor': 'middle' }, String(300 - i * 20));
}
add(vr, 'text', { x: 14, y: 566, transform: 'rotate(-90 14 566)', 'text-anchor': 'middle' }, '毫米');
add(vr, 'path', { d: 'M3 186.5H20', stroke: '#000', 'stroke-dasharray': '3 2' });
// palette
const colours = ['#21201e','#373533','#474543','#575553','#6b6967','#7d7b7a','#8f8e8e','#a3a2a2','#bcbcbc','#dcdcdc','#ffffff','#32127a','#0a86e0','#049648','#ffff00','#e84000','#f03078','#a84878','#f08400','#fc9a98','#70685c','#bcb0dc','#9084b8','#6478b8','#7460a0','#7c7098','#485878','#504a5c','#607080'];
document.getElementById('pal').innerHTML = colours.map(c => `<button aria-label="${c}" class="h-[17px] w-full border-x border-b border-[#555]" style="background:${c}"></button>`).join('');
</script>
</body>
</html>
